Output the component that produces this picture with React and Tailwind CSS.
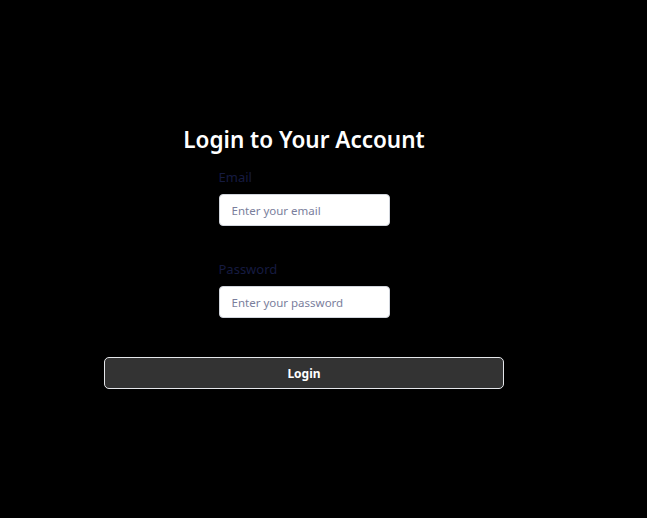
export default function App() {
  return (
    <div
      className="min-h-screen bg-black pt-[124px]"
      style={{ fontFamily: '"Noto Sans", "Open Sans", sans-serif' }}
    >
      <div className="ml-[104px] flex w-[400px] flex-col items-center">
        <h1 className="text-[22.5px] font-semibold leading-8 text-white">
          Login to Your Account
        </h1>

        <form className="mt-[11px] flex w-[171px] flex-col">
          <label className="text-[13px] leading-5 text-[#161b40]">Email</label>
          <input
            type="email"
            placeholder="Enter your email"
            className="mt-[7px] h-[32px] rounded-[4px] border border-gray-300 bg-white px-3 pt-px text-[11.5px] text-gray-800 placeholder:text-[#7a7e9c] outline-none"
          />

          <label className="mt-[33px] text-[13px] leading-5 text-[#161b40]">
            Password
          </label>
          <input
            type="password"
            placeholder="Enter your password"
            className="mt-[7px] h-[32px] rounded-[4px] border border-gray-300 bg-white px-3 pt-px text-[11.5px] text-gray-800 placeholder:text-[#7a7e9c] outline-none"
          />
        </form>

        <button
          type="button"
          className="mt-[39px] h-[32px] w-[400px] rounded-[5px] border border-gray-200 bg-[#333333] pt-px text-[12px] font-bold text-white"
        >
          Login
        </button>
      </div>
    </div>
  );
}
